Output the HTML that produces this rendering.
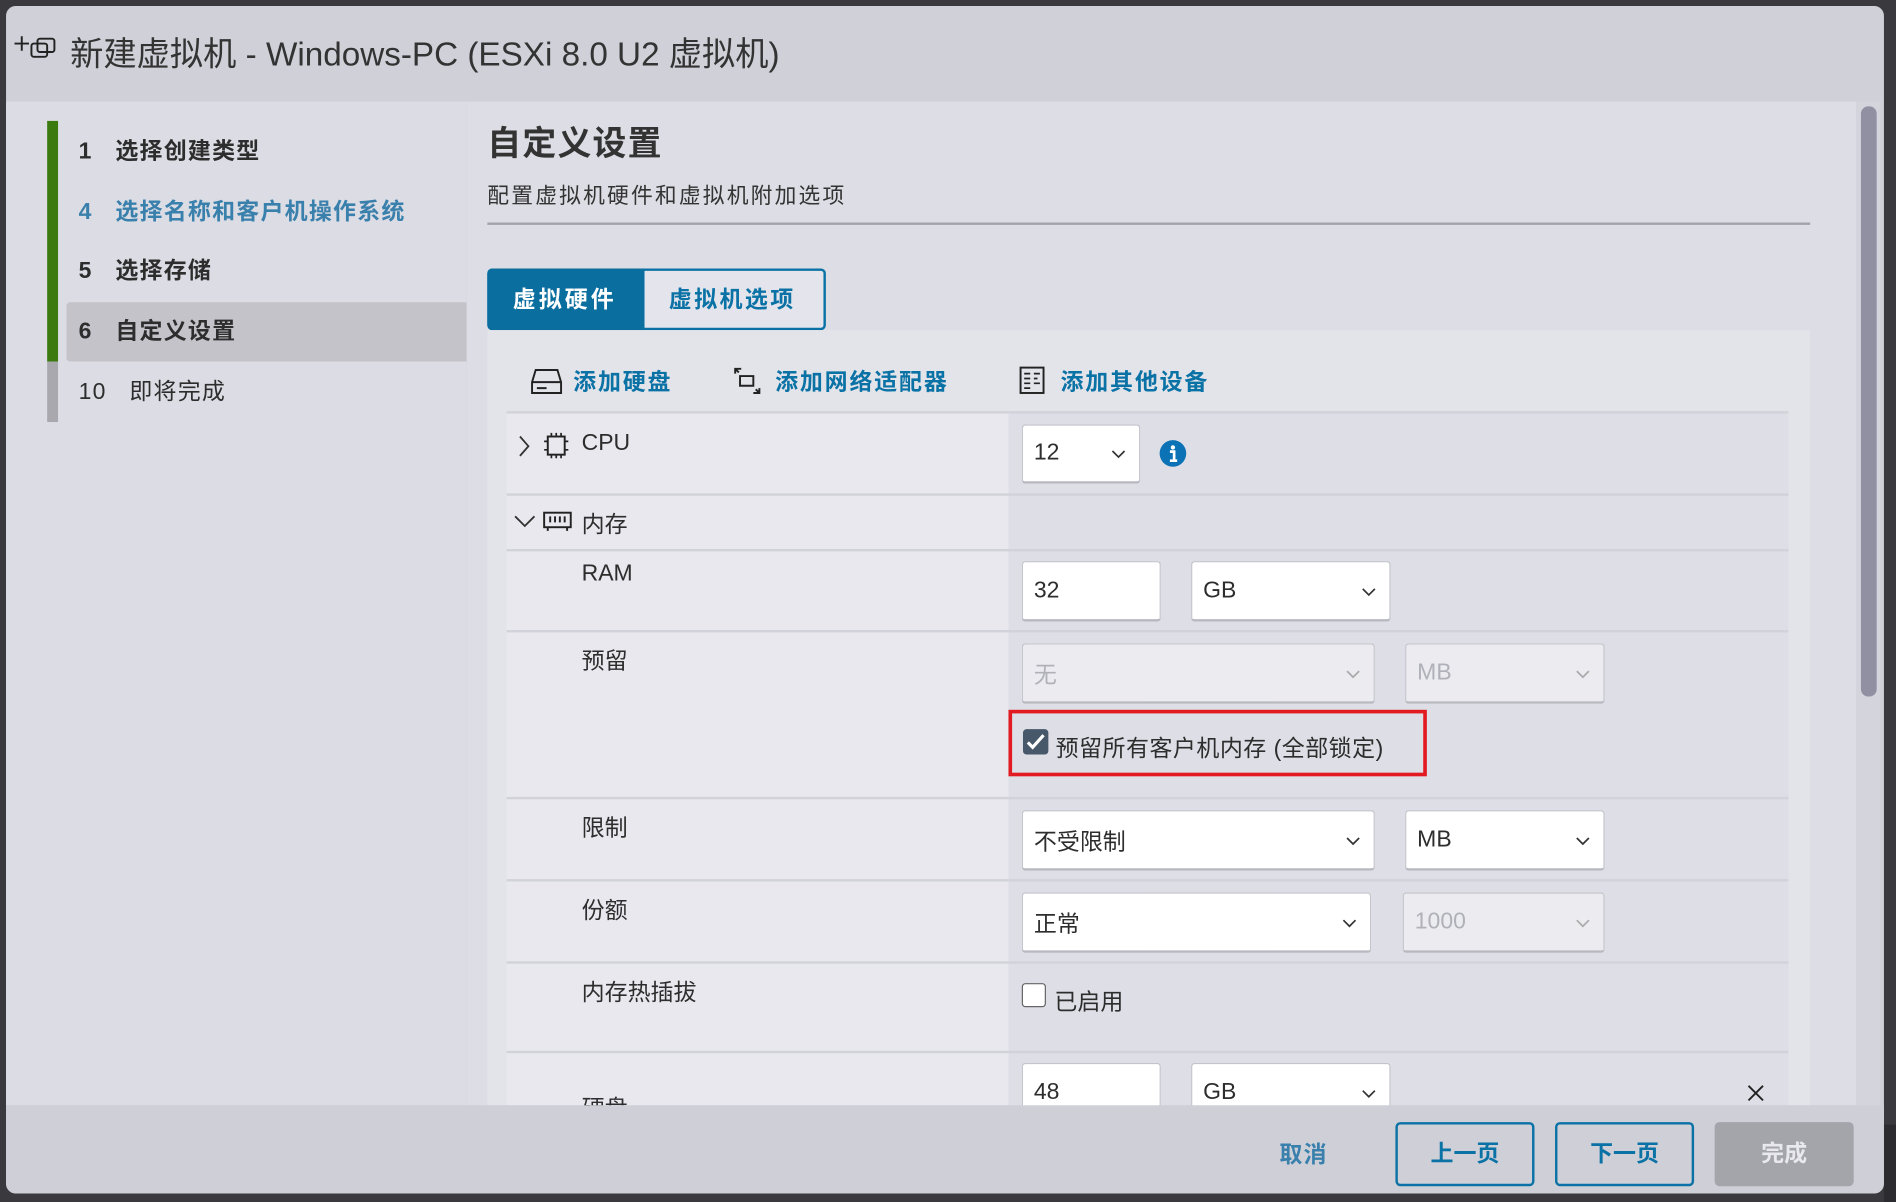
<!DOCTYPE html>
<html><head><meta charset="utf-8"><style>
html,body{margin:0;padding:0;width:1896px;height:1202px;overflow:hidden;background:#3a3a3e;}
#w{position:absolute;left:0;top:0;width:1568px;height:994px;transform:scale(1.2092);transform-origin:0 0;font-family:"Liberation Sans","Noto Sans CJK SC",sans-serif;color:#2d2d2d;}
.a{position:absolute;}
.t{position:absolute;white-space:nowrap;}
.nav{letter-spacing:1px}
.sel{position:absolute;background:#fff;border:1px solid #c4c4cc;border-bottom:2px solid #b8b8c0;border-radius:3px;box-sizing:border-box;font-size:19px;}
.sel span{position:absolute;left:9px;top:50%;transform:translateY(-50%);}
.sel.dis{background:#ebebf0;color:#b0b0b8;}
.chev{position:absolute;right:10px;top:50%;margin-top:-7px;}
.lab{position:absolute;font-size:19px;left:481px;}
.sep{position:absolute;left:419px;width:1060px;height:2px;background:#d2d2da;}
</style></head><body>
<div id="w">
 <div class="a" style="left:5px;top:5px;width:1553px;height:982px;background:#d0d0d9;border-radius:8px;"></div>
 <div class="a" style="left:1558px;top:930px;width:10px;height:64px;background:#2c2c30"></div>
 <svg class="a" style="left:10px;top:27px" width="38" height="28" viewBox="0 0 38 28"><path d="M2 9h12M8 3v12" stroke="#222" stroke-width="1.6" fill="none"/><rect x="16" y="9" width="13" height="11" rx="2" fill="none" stroke="#222" stroke-width="1.6"/><rect x="21" y="5" width="14" height="11" rx="2" fill="none" stroke="#222" stroke-width="1.6"/></svg>
 <div class="t" style="left:58px;top:22px;font-size:27.5px;color:#333">新建虚拟机 - Windows-PC (ESXi 8.0 U2 虚拟机)</div>

 <div class="a" style="left:5px;top:84px;width:381px;height:830px;background:#dcdce4"></div>
 <div class="a" style="left:39px;top:100px;width:9px;height:199px;background:#3a7a0e"></div>
 <div class="a" style="left:39px;top:299px;width:9px;height:50px;background:#a8a8ae"></div>
 <div class="a" style="left:55px;top:250px;width:331px;height:49px;background:#c3c3c9;border-radius:3px 0 0 3px"></div>
 <div class="t nav" style="left:65px;top:110px;font-size:19px;font-weight:bold">1&nbsp;&nbsp;&nbsp;选择创建类型</div>
 <div class="t nav" style="left:65px;top:160px;font-size:19px;font-weight:bold;color:#3a80ac">4&nbsp;&nbsp;&nbsp;选择名称和客户机操作系统</div>
 <div class="t nav" style="left:65px;top:209px;font-size:19px;font-weight:bold">5&nbsp;&nbsp;&nbsp;选择存储</div>
 <div class="t nav" style="left:65px;top:259px;font-size:19px;font-weight:bold">6&nbsp;&nbsp;&nbsp;自定义设置</div>
 <div class="t nav" style="left:65px;top:309px;font-size:19px;">10&nbsp;&nbsp;&nbsp;即将完成</div>

 <div class="a" style="left:386px;top:84px;width:1149px;height:830px;background:#dddde5"></div>
 <div class="a" style="left:1535px;top:84px;width:20px;height:830px;background:#d4d4dc"></div>
 <div class="a" style="left:1539px;top:88px;width:13px;height:488px;background:#9090a2;border-radius:6px"></div>
 <div class="t" style="left:403px;top:97px;font-size:28px;font-weight:bold;color:#333;letter-spacing:1px">自定义设置</div>
 <div class="t" style="left:403px;top:148px;font-size:18px;color:#333;letter-spacing:1.8px">配置虚拟机硬件和虚拟机附加选项</div>
 <div class="a" style="left:403px;top:184px;width:1094px;height:2px;background:#a4a4ac"></div>

 <div class="a" style="left:403px;top:222px;width:280px;height:51px;border:2px solid #0a72a5;box-sizing:border-box;border-radius:4px;background:#e4e4ec"></div>
 <div class="a" style="left:403px;top:222px;width:130px;height:51px;background:#0a6e9f;border-radius:4px 0 0 4px"></div>
 <div class="t" style="left:424px;top:233px;font-size:19px;font-weight:bold;color:#fff;letter-spacing:2.5px">虚拟硬件</div>
 <div class="t" style="left:553px;top:233px;font-size:19px;font-weight:bold;color:#0a72a5;letter-spacing:2px">虚拟机选项</div>

 <div class="a" style="left:403px;top:273px;width:1094px;height:641px;background:#e3e3ea"></div>
 <svg class="a" style="left:438px;top:304px" width="28" height="24" viewBox="0 0 28 24"><path d="M5 2h18l3 10v9H2v-9z M2 12h24 M6 17h8" fill="none" stroke="#222" stroke-width="1.6"/></svg>
 <div class="t" style="left:474px;top:301px;font-size:19px;font-weight:bold;color:#0a72a5;letter-spacing:1.5px">添加硬盘</div>
 <svg class="a" style="left:605px;top:302px" width="26" height="26" viewBox="0 0 26 26"><path d="M8 3H3v4 M3 3l3 3 M7 9h11v8H7z M18 23h5v-4 M23 23l-3-3" fill="none" stroke="#222" stroke-width="1.6"/></svg>
 <div class="t" style="left:641px;top:301px;font-size:19px;font-weight:bold;color:#0a72a5;letter-spacing:1.5px">添加网络适配器</div>
 <svg class="a" style="left:842px;top:302px" width="24" height="26" viewBox="0 0 24 26"><rect x="2" y="2" width="19" height="21" fill="none" stroke="#222" stroke-width="1.6"/><path d="M5 7h5M5 11h5M5 15h5M5 19h5M13 7h5M13 11h3M13 15h5" stroke="#222" stroke-width="1.4"/></svg>
 <div class="t" style="left:877px;top:301px;font-size:19px;font-weight:bold;color:#0a72a5;letter-spacing:1.5px">添加其他设备</div>

 <div class="a" style="left:419px;top:340px;width:415px;height:574px;background:#e8e8ee"></div>
 <div class="a" style="left:834px;top:340px;width:645px;height:574px;background:#dedee6"></div>
 <div class="sep" style="top:340px"></div>
 <div class="sep" style="top:408px"></div>
 <div class="sep" style="top:454px"></div>
 <div class="sep" style="top:521px"></div>
 <div class="sep" style="top:659px"></div>
 <div class="sep" style="top:727px"></div>
 <div class="sep" style="top:795px"></div>
 <div class="sep" style="top:869px"></div>

 <svg class="a" style="left:428px;top:359px" width="12" height="20" viewBox="0 0 12 20"><path d="M2 2l7 8-7 8" fill="none" stroke="#333" stroke-width="1.5"/></svg>
 <svg class="a" style="left:449px;top:357px" width="22" height="24" viewBox="0 0 22 24"><rect x="4" y="4" width="14" height="15" fill="none" stroke="#222" stroke-width="1.6"/><path d="M7 1v3M11 1v3M15 1v3M7 19v3M11 19v3M15 19v3M1 8h3M1 15h3M18 8h3M18 15h3" stroke="#222" stroke-width="1.4"/></svg>
 <div class="t" style="left:481px;top:356px;font-size:19px">CPU</div>
 <div class="sel" style="left:845px;top:351px;width:98px;height:49px"><span>12</span><svg class="chev" width="14" height="14" viewBox="0 0 14 14"><path d="M2 5l5 5 5-5" fill="none" stroke="#333" stroke-width="1.4"/></svg></div>
 <svg class="a" style="left:958px;top:363px" width="24" height="24" viewBox="0 0 24 24"><circle cx="12" cy="12" r="11" fill="#0a72b5"/><circle cx="12" cy="7" r="1.8" fill="#fff"/><path d="M9.5 10.5h3.5v7 M9.5 18h6" stroke="#fff" stroke-width="2.2" fill="none"/></svg>

 <svg class="a" style="left:424px;top:424px" width="20" height="14" viewBox="0 0 20 14"><path d="M2 3l8 8 8-8" fill="none" stroke="#333" stroke-width="1.5"/></svg>
 <svg class="a" style="left:448px;top:421px" width="26" height="20" viewBox="0 0 26 20"><rect x="2" y="3" width="22" height="12" fill="none" stroke="#222" stroke-width="1.6"/><path d="M7 6v5M11 6v5M15 6v5M19 6v5M5 15v3M21 15v3" stroke="#222" stroke-width="1.6"/></svg>
 <div class="t" style="left:481px;top:419px;font-size:19px">内存</div>

 <div class="lab" style="top:464px">RAM</div>
 <div class="sel" style="left:845px;top:464px;width:115px;height:50px"><span>32</span></div>
 <div class="sel" style="left:985px;top:464px;width:165px;height:50px"><span>GB</span><svg class="chev" width="14" height="14" viewBox="0 0 14 14"><path d="M2 5l5 5 5-5" fill="none" stroke="#333" stroke-width="1.4"/></svg></div>

 <div class="lab" style="top:532px">预留</div>
 <div class="sel dis" style="left:845px;top:532px;width:292px;height:50px"><span>无</span><svg class="chev" width="14" height="14" viewBox="0 0 14 14"><path d="M2 5l5 5 5-5" fill="none" stroke="#aaa" stroke-width="1.4"/></svg></div>
 <div class="sel dis" style="left:1162px;top:532px;width:165px;height:50px"><span>MB</span><svg class="chev" width="14" height="14" viewBox="0 0 14 14"><path d="M2 5l5 5 5-5" fill="none" stroke="#aaa" stroke-width="1.4"/></svg></div>
 <div class="a" style="left:834px;top:587px;width:346px;height:55px;border:3px solid #e21a22;box-sizing:border-box"></div>
 <div class="a" style="left:846px;top:603px;width:21px;height:21px;background:#46586a;border-radius:3px"></div>
 <svg class="a" style="left:846px;top:603px" width="21" height="21" viewBox="0 0 21 21"><path d="M4 11l4 4 9-10" fill="none" stroke="#fff" stroke-width="2.6"/></svg>
 <div class="t" style="left:873px;top:604px;font-size:19px;letter-spacing:0.4px">预留所有客户机内存 (全部锁定)</div>

 <div class="lab" style="top:670px">限制</div>
 <div class="sel" style="left:845px;top:670px;width:292px;height:50px"><span>不受限制</span><svg class="chev" width="14" height="14" viewBox="0 0 14 14"><path d="M2 5l5 5 5-5" fill="none" stroke="#333" stroke-width="1.4"/></svg></div>
 <div class="sel" style="left:1162px;top:670px;width:165px;height:50px"><span>MB</span><svg class="chev" width="14" height="14" viewBox="0 0 14 14"><path d="M2 5l5 5 5-5" fill="none" stroke="#333" stroke-width="1.4"/></svg></div>

 <div class="lab" style="top:738px">份额</div>
 <div class="sel" style="left:845px;top:738px;width:289px;height:50px"><span>正常</span><svg class="chev" width="14" height="14" viewBox="0 0 14 14"><path d="M2 5l5 5 5-5" fill="none" stroke="#333" stroke-width="1.4"/></svg></div>
 <div class="sel dis" style="left:1160px;top:738px;width:167px;height:50px"><span>1000</span><svg class="chev" width="14" height="14" viewBox="0 0 14 14"><path d="M2 5l5 5 5-5" fill="none" stroke="#aaa" stroke-width="1.4"/></svg></div>

 <div class="lab" style="top:806px">内存热插拔</div>
 <div class="a" style="left:845px;top:813px;width:20px;height:20px;border:1.5px solid #666;border-radius:3px;background:#fff;box-sizing:border-box"></div>
 <div class="t" style="left:872px;top:814px;font-size:19px">已启用</div>

 <div class="sel" style="left:845px;top:879px;width:115px;height:50px"><span>48</span></div>
 <div class="sel" style="left:985px;top:879px;width:165px;height:50px"><span>GB</span><svg class="chev" width="14" height="14" viewBox="0 0 14 14"><path d="M2 5l5 5 5-5" fill="none" stroke="#333" stroke-width="1.4"/></svg></div>
 <svg class="a" style="left:1444px;top:896px" width="16" height="16" viewBox="0 0 16 16"><path d="M2 2l12 12M14 2L2 14" stroke="#222" stroke-width="1.6"/></svg>
 <div class="t" style="left:481px;top:902px;font-size:19px">硬盘</div>

 <div class="a" style="left:5px;top:914px;width:1553px;height:73px;background:#cfcfd8;border-radius:0 0 8px 8px"></div>
 <div class="t" style="left:1058px;top:940px;font-size:19px;font-weight:bold;color:#3a80ac;letter-spacing:1px">取消</div>
 <div class="a" style="left:1154px;top:928px;width:115px;height:53px;border:2px solid #0a72a5;border-radius:4px;box-sizing:border-box;text-align:center;line-height:49px;font-size:19px;font-weight:bold;color:#0a72a5">上一页</div>
 <div class="a" style="left:1286px;top:928px;width:115px;height:53px;border:2px solid #0a72a5;border-radius:4px;box-sizing:border-box;text-align:center;line-height:49px;font-size:19px;font-weight:bold;color:#0a72a5">下一页</div>
 <div class="a" style="left:1418px;top:928px;width:115px;height:53px;background:#a4a4ab;border-radius:4px;text-align:center;line-height:53px;font-size:19px;font-weight:bold;color:#e8e8ee">完成</div>
</div>
</body></html>
